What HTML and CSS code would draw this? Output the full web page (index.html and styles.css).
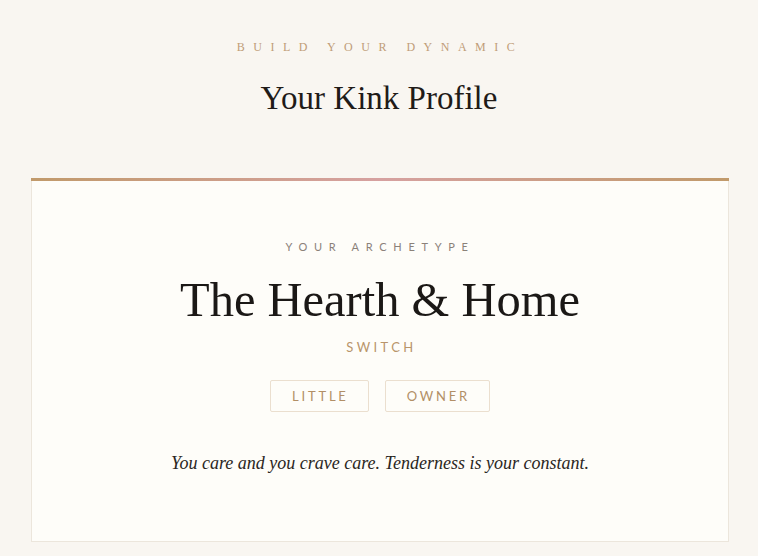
FILE: index.html
```html
<!DOCTYPE html>
<html lang="en">
<head>
<meta charset="utf-8">
<title>Your Kink Profile</title>
<link rel="stylesheet" href="styles.css">
</head>
<body>
<header class="intro">
  <p class="eyebrow">Build your dynamic</p>
  <h1 class="title">Your Kink Profile</h1>
</header>
<main class="wrap">
  <section class="card">
    <p class="label">Your archetype</p>
    <h2 class="archetype">The Hearth &amp; Home</h2>
    <p class="role">Switch</p>
    <ul class="tags">
      <li class="tag">Little</li>
      <li class="tag">Owner</li>
    </ul>
    <p class="desc">You care and you crave care. Tenderness is your constant.</p>
  </section>
</main>
</body>
</html>
```
FILE: styles.css
```css
* { box-sizing: border-box; }
html, body { margin: 0; padding: 0; }
body {
  background: #f9f6f1;
  font-family: "Liberation Serif", "DejaVu Serif", serif;
  color: #1f1b18;
  height: 556px;
  overflow: hidden;
}
.intro {
  padding-top: 40px;
  text-align: center;
}
.eyebrow {
  margin: 0;
  font-size: 12px;
  line-height: 14px;
  letter-spacing: 8.5px;
  text-transform: uppercase;
  color: #c09d78;
  padding-left: 2px;
}
.title {
  margin: 26px 0 0;
  font-weight: 400;
  font-size: 33px;
  line-height: 36px;
  color: #1f1b18;
}
.wrap {
  width: 698px;
  margin: 62px 0 0 31px;
}
.card {
  background: #fefdf9;
  border: 1px solid #ece6dc;
  border-top: 0;
  position: relative;
  text-align: center;
  padding: 62px 20px 67px;
}
.card::before {
  content: "";
  position: absolute;
  left: -1px;
  right: -1px;
  top: 0;
  height: 3px;
  background: linear-gradient(90deg, #c19a6b 0%, #d6a1a0 50%, #c19a6b 100%);
}
.label {
  margin: 0;
  font-family: "Lato", "Liberation Sans", sans-serif;
  font-size: 11px;
  line-height: 14px;
  letter-spacing: 6.7px;
  text-transform: uppercase;
  color: #8b8179;
  padding-left: 0;
}
.archetype {
  margin: 19px 0 0;
  font-weight: 400;
  font-size: 48.5px;
  line-height: 54px;
  color: #1b1816;
}
.role {
  margin: 12px 0 0;
  font-family: "Lato", "Liberation Sans", sans-serif;
  font-size: 13px;
  line-height: 16px;
  letter-spacing: 3.4px;
  text-transform: uppercase;
  color: #b9956b;
  padding-left: 3px;
}
.tags {
  list-style: none;
  margin: 25px 0 0;
  padding: 0;
  display: flex;
  justify-content: center;
  gap: 16px;
}
.tag {
  font-family: "Lato", "Liberation Sans", sans-serif;
  font-size: 13px;
  line-height: 16px;
  letter-spacing: 2.8px;
  text-transform: uppercase;
  color: #b28f66;
  border: 1px solid #ebdfcf;
  border-radius: 2px;
  padding: 7px 19px 7px 21px;
}
.desc {
  margin: 40px 0 0;
  font-style: italic;
  font-size: 18px;
  line-height: 22px;
  color: #2a2622;
}
```
